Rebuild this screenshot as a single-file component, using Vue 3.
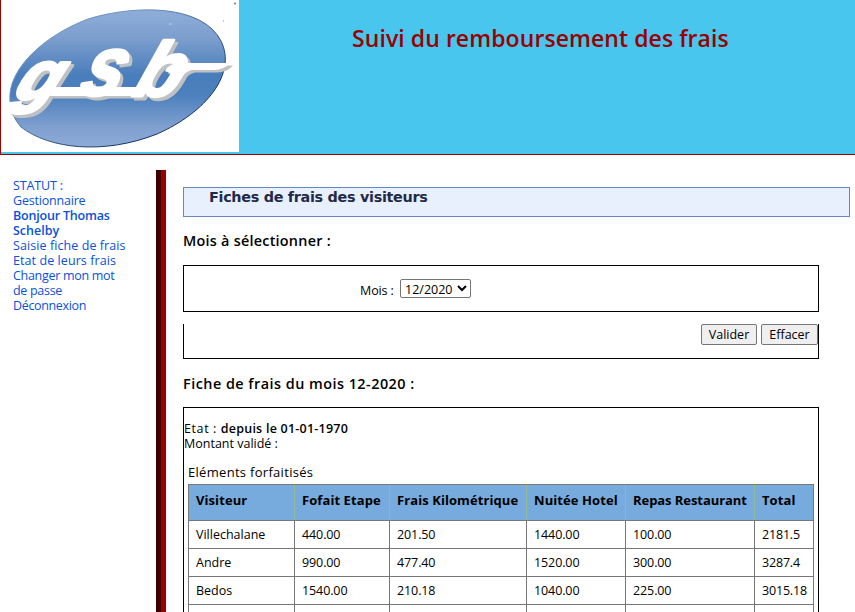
<script setup>
import { ref } from 'vue'

const month = ref('12/2020')
const columns = ['Visiteur', 'Fofait Etape', 'Frais Kilométrique', 'Nuitée Hotel', 'Repas Restaurant', 'Total']
const rows = [
  ['Villechalane', '440.00', '201.50', '1440.00', '100.00', '2181.5'],
  ['Andre', '990.00', '477.40', '1520.00', '300.00', '3287.4'],
  ['Bedos', '1540.00', '210.18', '1040.00', '225.00', '3015.18'],
  ['', '', '', '', '', '']
]
</script>

<template>
  <div class="page">
    <header class="banner">
      <svg class="logo" width="238" height="152" viewBox="1 0 238 152" role="img" aria-label="gsb">
        <defs>
          <linearGradient id="oval" x1="0" y1="0" x2="0" y2="1">
            <stop offset="0" stop-color="#8eaed8" />
            <stop offset="0.2" stop-color="#7d9fce" />
            <stop offset="0.48" stop-color="#497dbb" />
            <stop offset="0.62" stop-color="#4c80bd" />
            <stop offset="0.85" stop-color="#7f9fcf" />
            <stop offset="1" stop-color="#8eabd6" />
          </linearGradient>
          <linearGradient id="rim" x1="0" y1="0" x2="1" y2="1">
            <stop offset="0.3" stop-color="#7192bd" />
            <stop offset="0.75" stop-color="#12345f" />
          </linearGradient>
        </defs>
        <rect x="1" width="238" height="152" fill="#fff" />
        <path d="M10 101C7 70 43 36 88 19C137 4 203 5 221 41C237 73 207 112 157 134C104 155 49 149 21 127Q11 116 10 101Z" fill="url(#oval)" stroke="url(#rim)" stroke-width="1" />
        <circle cx="235" cy="3.500" r="1" fill="#777" />
        <circle cx="223.500" cy="21" r="0.700" fill="#aaa" />
        <circle cx="170.500" cy="24" r="1" fill="#b4cdec" />
        <g class="mark shade" transform="translate(3 2.500)">
          <text transform="translate(12 99) skewX(-24) scale(1.200 1.180)" font-size="58">g</text>
          <text transform="translate(77 95) skewX(-20) scale(0.940 1.080)" font-size="78">s</text>
          <text transform="translate(131 96) skewX(-20) scale(0.980 1)" font-size="77">b</text>
          <path d="M54 87H142L137 96H50ZM165 71Q169 63 181 63H230Q224 70 214 70H192Q186 71 181 78Z" />
        </g>
        <g class="mark">
          <text transform="translate(12 99) skewX(-24) scale(1.200 1.180)" font-size="58">g</text>
          <text transform="translate(77 95) skewX(-20) scale(0.940 1.080)" font-size="78">s</text>
          <text transform="translate(131 96) skewX(-20) scale(0.980 1)" font-size="77">b</text>
          <path d="M54 87H142L137 96H50ZM165 71Q169 63 181 63H230Q224 70 214 70H192Q186 71 181 78Z" />
        </g>
      </svg>
      <h1><span>Suivi du remboursement des frais</span></h1>
    </header>

    <div class="columns">
      <nav>
        <span class="status">STATUT :</span>
        <span class="role">Gestionnaire</span>
        <strong class="hello">Bonjour Thomas</strong>
        <strong class="name">Schelby</strong>
        <a class="entry">Saisie fiche de frais</a>
        <a class="states">Etat de leurs frais</a>
        <a class="change">Changer mon mot<br />de passe</a>
        <a class="logout">Déconnexion</a>
      </nav>

      <main>
        <h2>Fiches de frais des visiteurs</h2>
        <h3 class="choose">Mois à sélectionner :</h3>
        <div class="box month">
          <label for="month">Mois :</label>
          <select id="month" v-model="month">
            <option>12/2020</option>
          </select>
        </div>
        <div class="box actions">
          <button class="ok">Valider</button>
          <button class="reset">Effacer</button>
        </div>
        <h3 class="sheet">Fiche de frais du mois 12-2020 :</h3>
        <section class="box details">
          <p class="state"><span>Etat : </span><strong>depuis le 01-01-1970</strong></p>
          <p class="amount">Montant validé :</p>
          <p class="caption">Eléments forfaitisés</p>
          <table>
            <colgroup>
              <col class="c1" /><col class="c2" /><col class="c3" /><col class="c4" /><col class="c5" /><col class="c6" />
            </colgroup>
            <thead>
              <tr><th v-for="c in columns" :key="c">{{ c }}</th></tr>
            </thead>
            <tbody>
              <tr v-for="(r, i) in rows" :key="i">
                <td v-for="(v, j) in r" :key="j">{{ v }}</td>
              </tr>
            </tbody>
          </table>
        </section>
      </main>
    </div>
  </div>
</template>

<style>
body { background: #fff; overflow: hidden; }
</style>

<style scoped>
* { box-sizing: border-box; }
.page { width: 855px; height: 612px; overflow: hidden; font: 12.5px/15px "Trebuchet MS", "Open Sans", sans-serif; color: #000; }
.banner { display: flex; align-items: flex-start; height: 155px; background: #48c6ee; border-left: 1px solid #900; border-bottom: 1px solid #900; }
.logo { display: block; flex: none; }
.mark { font-family: "Liberation Sans", sans-serif; font-weight: bold; font-style: italic; fill: #fff; stroke: #fff; stroke-width: 3; stroke-linejoin: round; }
.mark path { stroke: none; }
.shade { fill: #bfc1c3; stroke: #bfc1c3; }
h1 { margin: 0; padding: 22px 0 0 113px; font-size: 23px; line-height: 32px; font-weight: 600; letter-spacing: 0.07px; color: #900; white-space: nowrap; }
.columns { display: flex; height: 457px; padding-top: 15px; }
nav { display: flex; flex-direction: column; align-items: flex-start; width: 156px; padding: 8px 0 0 13px; color: #0a50dc; white-space: nowrap; }
nav strong { font-weight: 600; }
.status { letter-spacing: -0.15px; }
.role { letter-spacing: -0.2px; }
.hello { letter-spacing: -0.2px; }
.entry, .states { letter-spacing: 0.08px; }
.change { letter-spacing: -0.3px; }
.logout { letter-spacing: -0.35px; }
main { flex: 1; margin-left: 5px; padding: 17px 5px 0 17px; border-left: 5px solid #900; box-shadow: -5px 0 #400000; }
h2 { margin: 0; height: 30px; border: 1px solid #6688c0; background: #e8f0fe; padding: 0 0 0 25px; font: bold 14.4px/19px "DejaVu Sans", sans-serif; letter-spacing: -0.31px; color: #1f2a48; }
h3 { margin: 0; font-size: 14.4px; line-height: 20px; font-weight: 600; white-space: nowrap; }
.choose { padding-top: 14px; height: 48px; letter-spacing: 0.25px; }
.sheet { padding-top: 15px; height: 48px; letter-spacing: 0.48px; }
.box { width: 636px; border: 1px solid #000; }
.month { display: flex; height: 47px; padding: 13px 0 0 176px; }
label { width: 40px; padding-top: 4px; white-space: nowrap; letter-spacing: -0.1px; }
select { width: 71px; height: 19px; padding: 0; font: 12.5px "Trebuchet MS", "Open Sans", sans-serif; border: 1px solid #767676; border-radius: 2px; background-color: #fff; color: #000; }
.actions { display: flex; justify-content: flex-end; gap: 4px; height: 35px; margin-top: 12px; border-top: 0; }
button { height: 21px; padding: 0; font: 12.5px/17px "Trebuchet MS", "Open Sans", sans-serif; border: 1px solid #767676; border-radius: 2px; background: #efefef; color: #000; }
.ok { width: 56px; }
.reset { width: 57px; }
.details { height: 300px; padding: 13px 4px 0; }
.details p { margin: 0; white-space: nowrap; }
.details .state, .details .amount { margin-left: -4px; }
.state span { letter-spacing: 0.6px; }
.state strong { font-weight: 600; letter-spacing: 0.23px; }
.details .caption { padding-top: 12px; height: 33px; font-size: 13px; line-height: 18px; letter-spacing: 0.3px; }
table { width: 626px; table-layout: fixed; border-collapse: separate; border-spacing: 0; border: 1px solid #777; border-width: 1px 0 0 1px; }
.c1 { width: 106px; } .c2 { width: 95px; } .c3 { width: 137px; } .c4 { width: 99px; } .c5 { width: 129px; } .c6 { width: 59px; }
th { height: 36px; padding: 6px 0 0 7px; text-align: left; vertical-align: top; font-size: 13px; line-height: 18px; font-weight: 700; letter-spacing: 0.08px; background: repeating-linear-gradient(#aacc55 0 1px, #77aadd 1px 2px) right top / 1px 100% no-repeat border-box #77aadd; border-bottom: 1px solid #777; white-space: nowrap; }
th:nth-child(5) { letter-spacing: -0.06px; }
th:last-child { border-right: 1px solid #777; }
td { height: 28px; padding: 0 0 0 7px; border-right: 1px solid #777; border-bottom: 1px solid #777; white-space: nowrap; letter-spacing: -0.1px; }
td:first-child { letter-spacing: 0; }
td:last-child { letter-spacing: -0.18px; }
</style>
